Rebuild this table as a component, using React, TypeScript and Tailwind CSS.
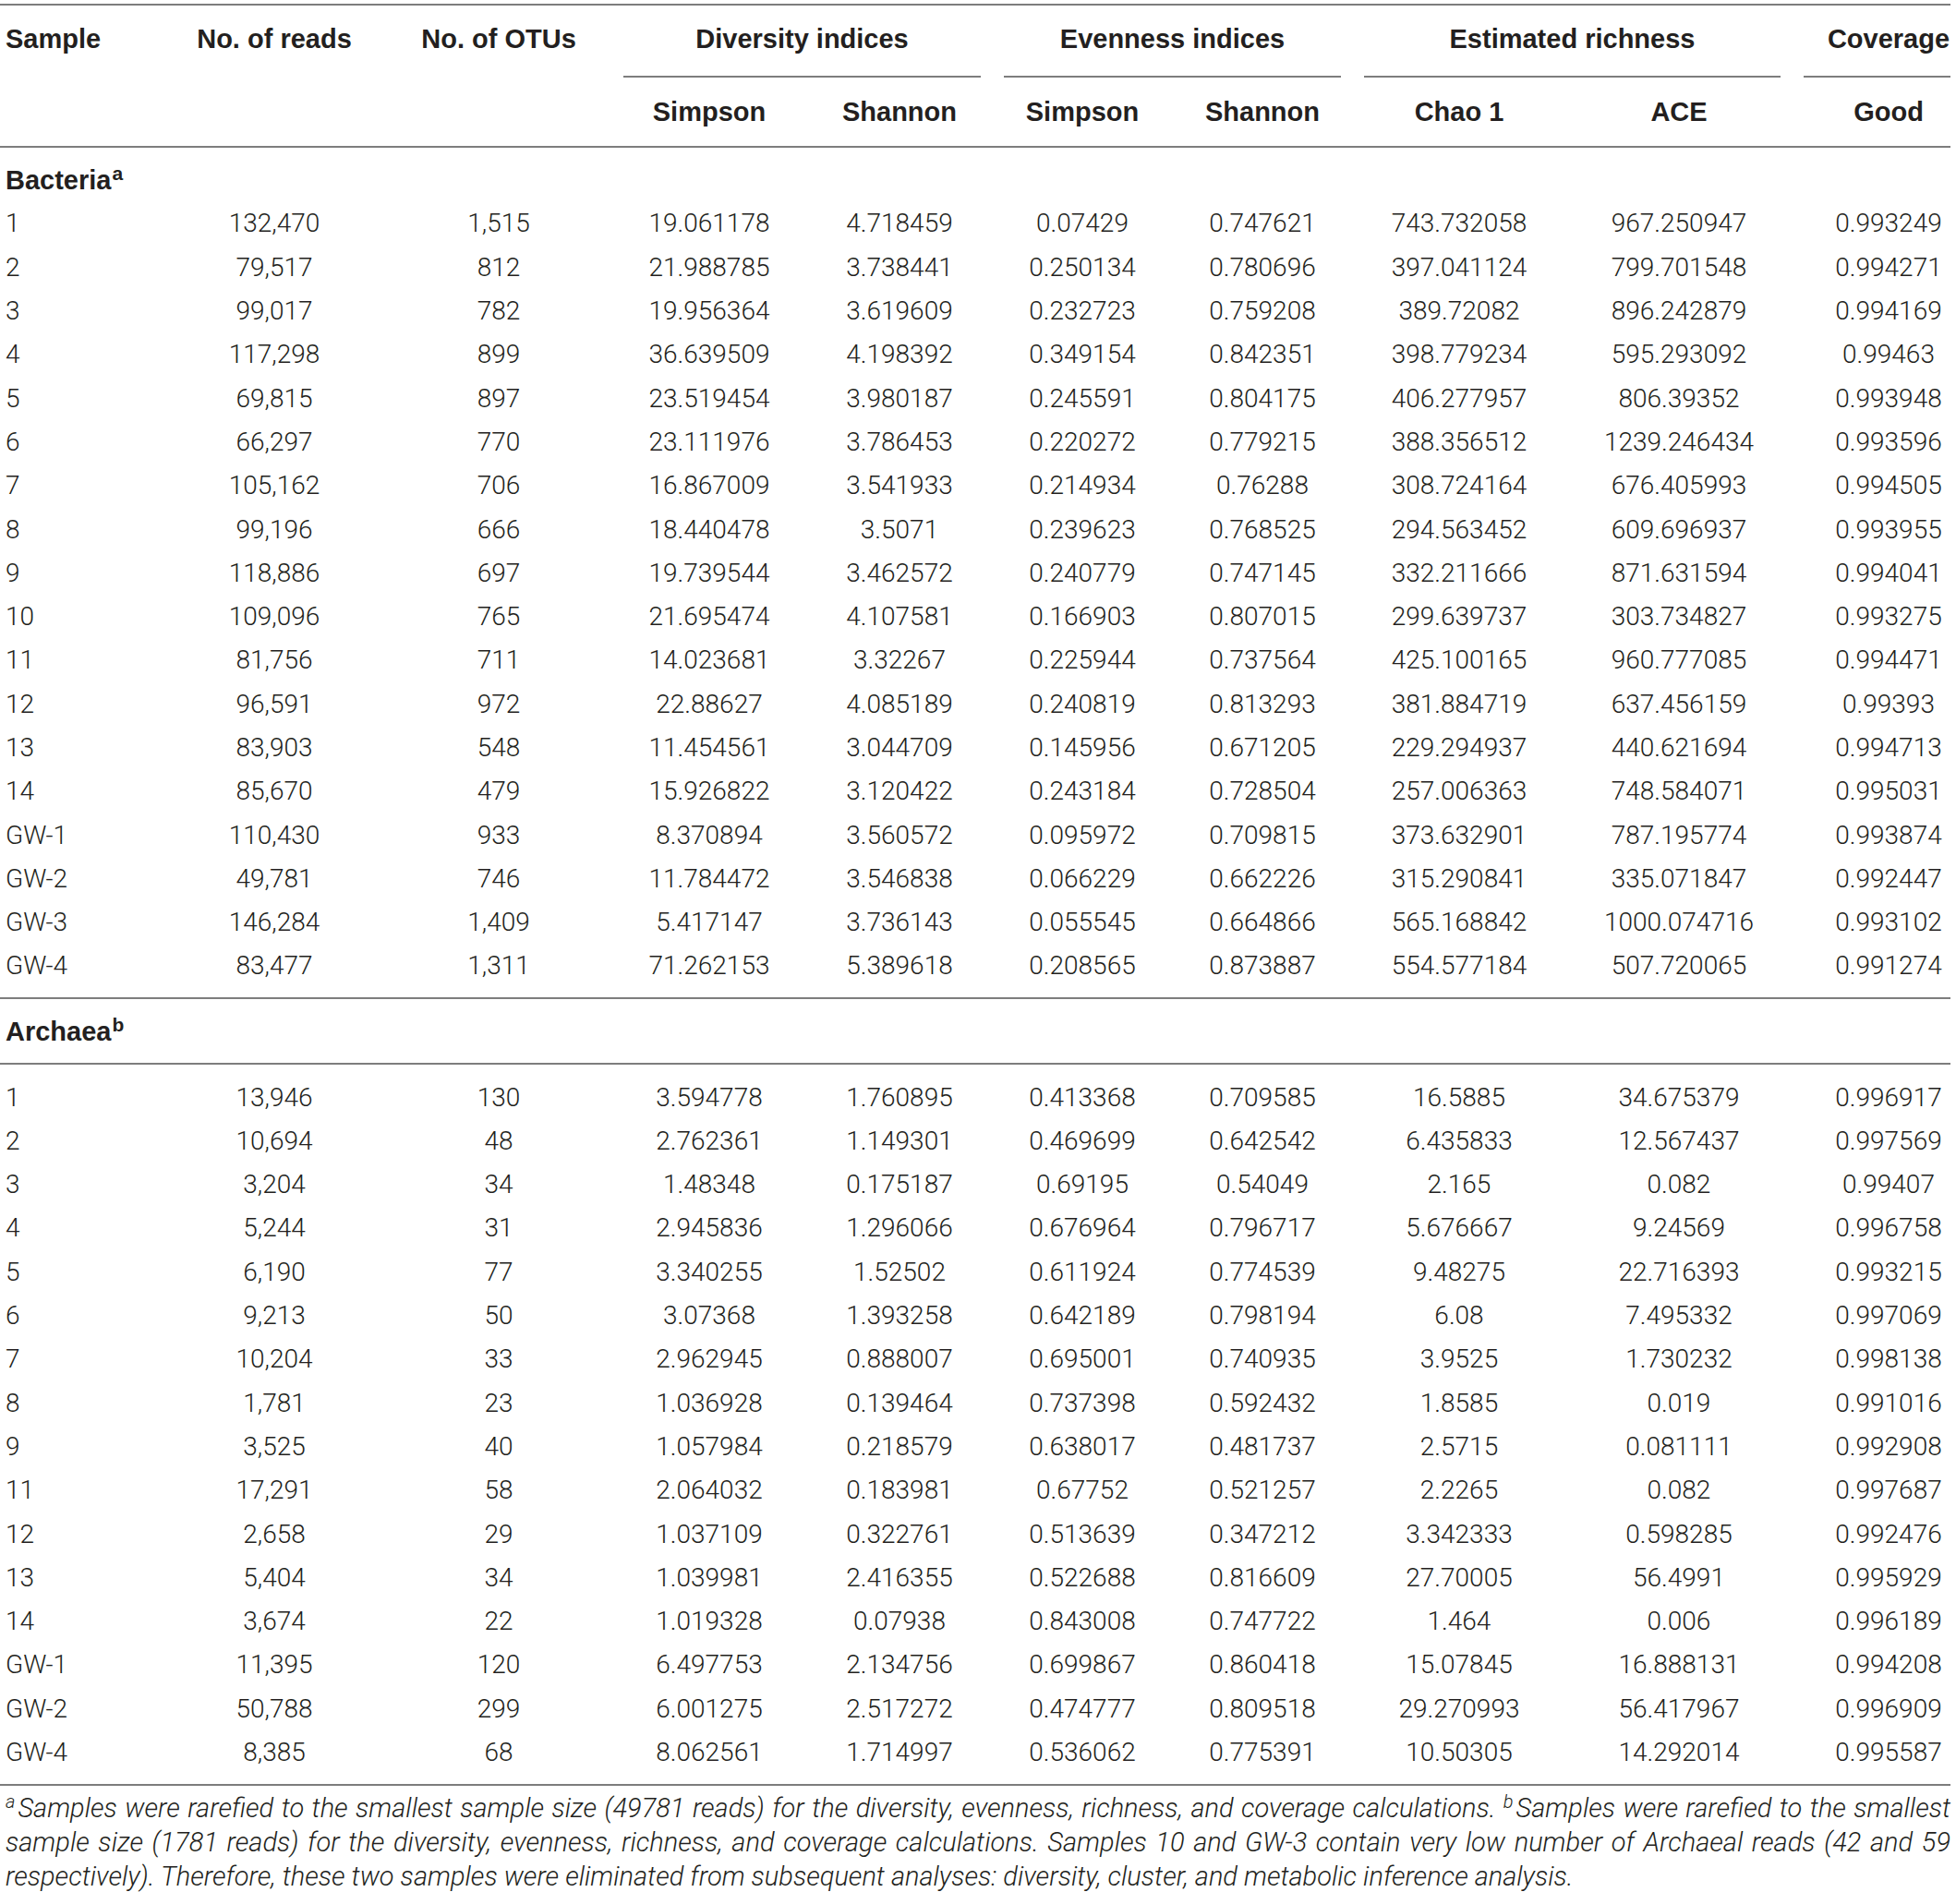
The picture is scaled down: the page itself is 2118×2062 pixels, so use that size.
const cols =
  "grid grid-cols-[180px_234px_252px_204px_208px_188px_202px_224px_252px_168px]"
const bold = "font-['Liberation_Sans',Arial,sans-serif] font-bold text-[29px]"

type Row = string[]

const bacteria: Row[] = [
  ["1", "132,470", "1,515", "19.061178", "4.718459", "0.07429", "0.747621", "743.732058", "967.250947", "0.993249"],
  ["2", "79,517", "812", "21.988785", "3.738441", "0.250134", "0.780696", "397.041124", "799.701548", "0.994271"],
  ["3", "99,017", "782", "19.956364", "3.619609", "0.232723", "0.759208", "389.72082", "896.242879", "0.994169"],
  ["4", "117,298", "899", "36.639509", "4.198392", "0.349154", "0.842351", "398.779234", "595.293092", "0.99463"],
  ["5", "69,815", "897", "23.519454", "3.980187", "0.245591", "0.804175", "406.277957", "806.39352", "0.993948"],
  ["6", "66,297", "770", "23.111976", "3.786453", "0.220272", "0.779215", "388.356512", "1239.246434", "0.993596"],
  ["7", "105,162", "706", "16.867009", "3.541933", "0.214934", "0.76288", "308.724164", "676.405993", "0.994505"],
  ["8", "99,196", "666", "18.440478", "3.5071", "0.239623", "0.768525", "294.563452", "609.696937", "0.993955"],
  ["9", "118,886", "697", "19.739544", "3.462572", "0.240779", "0.747145", "332.211666", "871.631594", "0.994041"],
  ["10", "109,096", "765", "21.695474", "4.107581", "0.166903", "0.807015", "299.639737", "303.734827", "0.993275"],
  ["11", "81,756", "711", "14.023681", "3.32267", "0.225944", "0.737564", "425.100165", "960.777085", "0.994471"],
  ["12", "96,591", "972", "22.88627", "4.085189", "0.240819", "0.813293", "381.884719", "637.456159", "0.99393"],
  ["13", "83,903", "548", "11.454561", "3.044709", "0.145956", "0.671205", "229.294937", "440.621694", "0.994713"],
  ["14", "85,670", "479", "15.926822", "3.120422", "0.243184", "0.728504", "257.006363", "748.584071", "0.995031"],
  ["GW-1", "110,430", "933", "8.370894", "3.560572", "0.095972", "0.709815", "373.632901", "787.195774", "0.993874"],
  ["GW-2", "49,781", "746", "11.784472", "3.546838", "0.066229", "0.662226", "315.290841", "335.071847", "0.992447"],
  ["GW-3", "146,284", "1,409", "5.417147", "3.736143", "0.055545", "0.664866", "565.168842", "1000.074716", "0.993102"],
  ["GW-4", "83,477", "1,311", "71.262153", "5.389618", "0.208565", "0.873887", "554.577184", "507.720065", "0.991274"],
]

const archaea: Row[] = [
  ["1", "13,946", "130", "3.594778", "1.760895", "0.413368", "0.709585", "16.5885", "34.675379", "0.996917"],
  ["2", "10,694", "48", "2.762361", "1.149301", "0.469699", "0.642542", "6.435833", "12.567437", "0.997569"],
  ["3", "3,204", "34", "1.48348", "0.175187", "0.69195", "0.54049", "2.165", "0.082", "0.99407"],
  ["4", "5,244", "31", "2.945836", "1.296066", "0.676964", "0.796717", "5.676667", "9.24569", "0.996758"],
  ["5", "6,190", "77", "3.340255", "1.52502", "0.611924", "0.774539", "9.48275", "22.716393", "0.993215"],
  ["6", "9,213", "50", "3.07368", "1.393258", "0.642189", "0.798194", "6.08", "7.495332", "0.997069"],
  ["7", "10,204", "33", "2.962945", "0.888007", "0.695001", "0.740935", "3.9525", "1.730232", "0.998138"],
  ["8", "1,781", "23", "1.036928", "0.139464", "0.737398", "0.592432", "1.8585", "0.019", "0.991016"],
  ["9", "3,525", "40", "1.057984", "0.218579", "0.638017", "0.481737", "2.5715", "0.081111", "0.992908"],
  ["11", "17,291", "58", "2.064032", "0.183981", "0.67752", "0.521257", "2.2265", "0.082", "0.997687"],
  ["12", "2,658", "29", "1.037109", "0.322761", "0.513639", "0.347212", "3.342333", "0.598285", "0.992476"],
  ["13", "5,404", "34", "1.039981", "2.416355", "0.522688", "0.816609", "27.70005", "56.4991", "0.995929"],
  ["14", "3,674", "22", "1.019328", "0.07938", "0.843008", "0.747722", "1.464", "0.006", "0.996189"],
  ["GW-1", "11,395", "120", "6.497753", "2.134756", "0.699867", "0.860418", "15.07845", "16.888131", "0.994208"],
  ["GW-2", "50,788", "299", "6.001275", "2.517272", "0.474777", "0.809518", "29.270993", "56.417967", "0.996909"],
  ["GW-4", "8,385", "68", "8.062561", "1.714997", "0.536062", "0.775391", "10.50305", "14.292014", "0.995587"],
]

function DataRow({ row }: { row: Row }) {
  return (
    <div className={`${cols} h-[47.3px]`}>
      {row.map((cell, i) => (
        <div
          key={i}
          className={`flex items-center ${
            i === 0 ? "pl-[6px]" : i === 9 ? "justify-center pl-[34px]" : "justify-center"
          }`}
        >
          {cell}
        </div>
      ))}
    </div>
  )
}

function GroupHead({ label, span, className }: { label: string; span: string; className: string }) {
  return (
    <div className={`${span} flex items-center justify-center border-b-2 border-[#7d7d7d] pb-[4px] ${className}`}>
      {label}
    </div>
  )
}

export default function App() {
  return (
    <div className="w-[2118px] bg-white pt-[4px] text-[#231f20] font-['Roboto',Arial,sans-serif] font-light text-[28px] leading-none">
      <div className="w-[2112px]">
        {/* header */}
        <div className={`border-t-2 border-b-2 border-[#7d7d7d] ${bold}`}>
          <div className={`${cols} h-[78px]`}>
            <div className="flex items-center pl-[6px] pb-[6px]">Sample</div>
            <div className="flex items-center justify-center pb-[6px]">No. of reads</div>
            <div className="flex items-center justify-center pb-[6px]">No. of OTUs</div>
            <GroupHead label="Diversity indices" span="col-span-2" className="ml-[9px] mr-[16px]" />
            <GroupHead label="Evenness indices" span="col-span-2" className="ml-[9px] mr-[16px]" />
            <GroupHead label="Estimated richness" span="col-span-2" className="ml-[9px] mr-[16px]" />
            <GroupHead label="Coverage" span="col-span-1" className="ml-[9px] pl-[25px]" />
          </div>
          <div className={`${cols} h-[74px]`}>
            <div />
            <div />
            <div />
            <div className="flex items-center justify-center">Simpson</div>
            <div className="flex items-center justify-center">Shannon</div>
            <div className="flex items-center justify-center">Simpson</div>
            <div className="flex items-center justify-center">Shannon</div>
            <div className="flex items-center justify-center">Chao 1</div>
            <div className="flex items-center justify-center">ACE</div>
            <div className="flex items-center justify-center pl-[34px]">Good</div>
          </div>
        </div>

        {/* bacteria */}
        <div className="pt-[11.5px] pb-[10px] border-b-2 border-[#7d7d7d]">
          <div className={`h-[47.3px] flex items-center pl-[6px] ${bold}`}>
            Bacteria<span className="text-[21px] relative -top-[8px] ml-[1px]">a</span>
          </div>
          {bacteria.map((r) => (
            <DataRow key={"b" + r[0]} row={r} />
          ))}
        </div>

        {/* archaea */}
        <div className="pt-[11.5px] pb-[10px] border-b-2 border-[#7d7d7d]">
          <div className={`h-[47.3px] flex items-center pl-[6px] ${bold}`}>
            Archaea<span className="text-[21px] relative -top-[8px] ml-[1px]">b</span>
          </div>
        </div>
        <div className="pt-[12px] pb-[10px] border-b-2 border-[#7d7d7d]">
          {archaea.map((r) => (
            <DataRow key={"a" + r[0]} row={r} />
          ))}
        </div>

        {/* footnote */}
        <div className="pt-[6px] pl-[6px] italic text-[29px] leading-[37px] whitespace-nowrap">
          <div className="[text-align-last:justify]">
            <sup className="text-[20px] mr-[3px]">a</sup>Samples were rarefied to the smallest sample size (49781 reads) for the diversity, evenness, richness, and coverage calculations. <sup className="text-[20px] mr-[3px]">b</sup>Samples were rarefied to the smallest
          </div>
          <div className="[text-align-last:justify]">
            sample size (1781 reads) for the diversity, evenness, richness, and coverage calculations. Samples 10 and GW-3 contain very low number of Archaeal reads (42 and 59
          </div>
          <div>
            respectively). Therefore, these two samples were eliminated from subsequent analyses: diversity, cluster, and metabolic inference analysis.
          </div>
        </div>
      </div>
    </div>
  )
}
